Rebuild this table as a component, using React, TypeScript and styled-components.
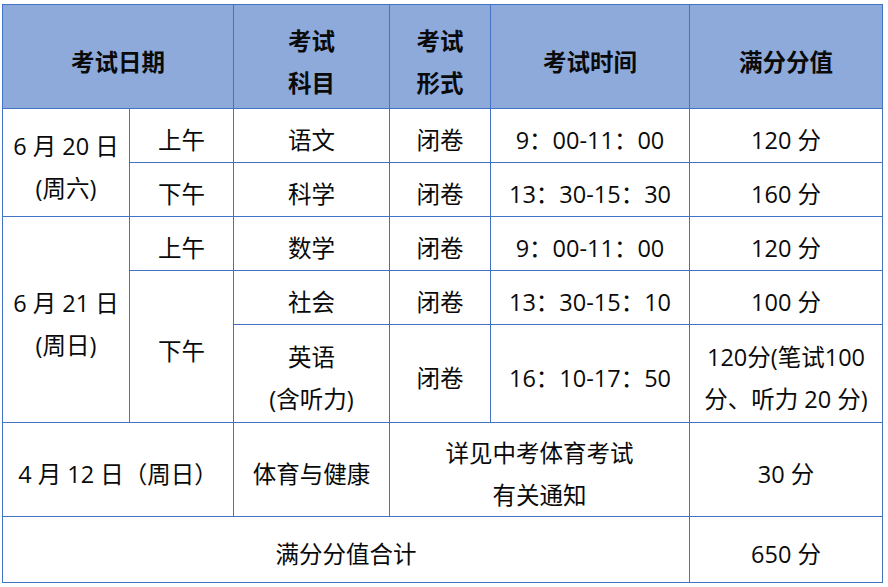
import React from "react";
import styled, { createGlobalStyle } from "styled-components";

const Global = createGlobalStyle`
  html, body { margin: 0; padding: 0; background: #ffffff; }
  body { font-family: "Open Sans", "Noto Sans CJK SC", "Noto Sans", sans-serif; color: #0a0a0a; }
`;

const Page = styled.div`
  padding: 4px 0 0 2px;
`;

const Table = styled.table`
  border-collapse: collapse;
  table-layout: fixed;
  width: 881px;
  font-size: 23.5px;
  line-height: 30px;
`;

const Row = styled.tr<{ $h: number }>`
  height: ${(p) => p.$h}px;
`;

const Head = styled.th`
  background: #8eaadb;
  border: 1px solid #4472c4;
  font-weight: 700;
  text-align: center;
  vertical-align: middle;
  padding: 10px 2px 0;
  color: #0a0a0a;
`;

const Cell = styled.td`
  border: 1px solid #4472c4;
  text-align: center;
  vertical-align: middle;
  padding: 8px 0 0;
  white-space: nowrap;
`;

const Line = styled.div`
  display: block;
  line-height: 42px;
`;

const widths = [127, 104, 156, 101, 199, 193];

export default function App() {
  return (
    <>
      <Global />
      <Page>
        <Table>
          <colgroup>
            {widths.map((w, i) => (
              <col key={i} style={{ width: w }} />
            ))}
          </colgroup>
          <tbody>
            <Row $h={104}>
              <Head colSpan={2}>考试日期</Head>
              <Head>
                <Line>考试</Line>
                <Line>科目</Line>
              </Head>
              <Head>
                <Line>考试</Line>
                <Line>形式</Line>
              </Head>
              <Head>考试时间</Head>
              <Head>满分分值</Head>
            </Row>
            <Row $h={54}>
              <Cell rowSpan={2}>
                <Line>6 月 20 日</Line>
                <Line>(周六)</Line>
              </Cell>
              <Cell>上午</Cell>
              <Cell>语文</Cell>
              <Cell>闭卷</Cell>
              <Cell>9：00-11：00</Cell>
              <Cell>120 分</Cell>
            </Row>
            <Row $h={54}>
              <Cell>下午</Cell>
              <Cell>科学</Cell>
              <Cell>闭卷</Cell>
              <Cell>13：30-15：30</Cell>
              <Cell>160 分</Cell>
            </Row>
            <Row $h={54}>
              <Cell rowSpan={3}>
                <Line>6 月 21 日</Line>
                <Line>(周日)</Line>
              </Cell>
              <Cell>上午</Cell>
              <Cell>数学</Cell>
              <Cell>闭卷</Cell>
              <Cell>9：00-11：00</Cell>
              <Cell>120 分</Cell>
            </Row>
            <Row $h={54}>
              <Cell rowSpan={2}>下午</Cell>
              <Cell>社会</Cell>
              <Cell>闭卷</Cell>
              <Cell>13：30-15：10</Cell>
              <Cell>100 分</Cell>
            </Row>
            <Row $h={98}>
              <Cell>
                <Line>英语</Line>
                <Line>(含听力)</Line>
              </Cell>
              <Cell>闭卷</Cell>
              <Cell>16：10-17：50</Cell>
              <Cell>
                <Line>120分(笔试100</Line>
                <Line>分、听力 20 分)</Line>
              </Cell>
            </Row>
            <Row $h={94}>
              <Cell colSpan={2}>4 月 12 日（周日）</Cell>
              <Cell>体育与健康</Cell>
              <Cell colSpan={2}>
                <Line>详见中考体育考试</Line>
                <Line>有关通知</Line>
              </Cell>
              <Cell>30 分</Cell>
            </Row>
            <Row $h={66}>
              <Cell colSpan={5}>满分分值合计</Cell>
              <Cell>650 分</Cell>
            </Row>
          </tbody>
        </Table>
      </Page>
    </>
  );
}
